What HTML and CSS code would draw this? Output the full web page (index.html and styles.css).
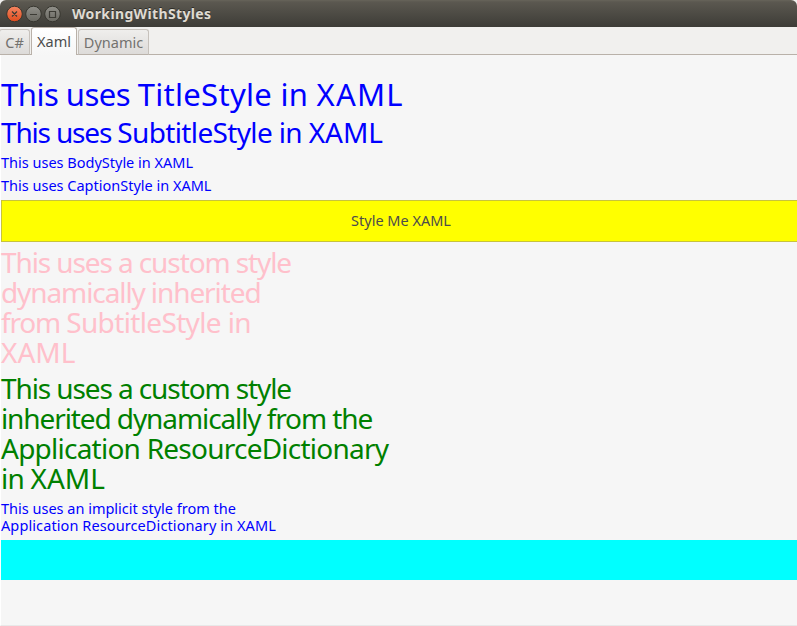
FILE: index.html
```html
<!DOCTYPE html>
<html lang="en">
<head>
<meta charset="utf-8">
<title>WorkingWithStyles</title>
<link rel="stylesheet" href="styles.css">
</head>
<body>
<div class="window">
  <header class="titlebar">
    <svg class="controls" width="56" height="18" viewBox="0 0 56 18" aria-hidden="true">
      <defs>
        <linearGradient id="close" x2="0" y2="1"><stop stop-color="#f58662"/><stop offset="1" stop-color="#df4c1d"/></linearGradient>
        <linearGradient id="plain" x2="0" y2="1"><stop stop-color="#91908a"/><stop offset="1" stop-color="#696861"/></linearGradient>
      </defs>
      <g stroke="#37362f">
        <circle cx="8.5" cy="9" r="7.8" fill="url(#close)"/>
        <circle cx="27.5" cy="9" r="7.8" fill="url(#plain)"/>
        <circle cx="46.5" cy="9" r="7.8" fill="url(#plain)"/>
      </g>
      <path d="M6 6.5l5 5m0-5l-5 5M24 9.5h7M43.5 6.5h6v6h-6z" fill="none" stroke="#3c3b35" stroke-width="1.2"/>
    </svg>
    <h1 class="window-title">WorkingWithStyles</h1>
  </header>
  <nav class="tabs">
    <div class="tab tab-first">C#</div>
    <div class="tab tab-active">Xaml</div>
    <div class="tab tab-last">Dynamic</div>
  </nav>
  <main class="page">
    <p class="label title"><span class="title-lead">This uses </span>TitleStyle in <span class="wide">XAML</span></p>
    <p class="label subtitle"><span class="subtitle-lead">This uses </span><span class="subtitle-rest">SubtitleStyle in </span><span class="normal">XAML</span></p>
    <p class="label body">This uses BodyStyle in XAML</p>
    <p class="label body caption">This uses CaptionStyle in XAML</p>
    <button class="style-button">Style Me XAML</button>
    <p class="label subtitle pink"><span class="tight">This uses a custom style</span><br><span class="tight">dynamically inherited</span><br><span class="subtitle-lead">from </span><span class="subtitle-rest">SubtitleStyle in</span><br><span class="normal">XAML</span></p>
    <p class="label subtitle green"><span class="tight">This uses a custom style</span><br><span class="tight">inherited dynamically from the</span><br>Application ResourceDictionary<br>in <span class="normal">XAML</span></p>
    <p class="label body implicit">This uses an implicit style from the<br><span class="loose">Application ResourceDictionary in XAML</span></p>
    <div class="box"></div>
  </main>
</div>
</body>
</html>
```
FILE: styles.css
```css
* { box-sizing: border-box; }
body {
  margin: 0;
  font-family: "Noto Sans", sans-serif;
  font-size: 14.5px;
  overflow: hidden;
}
.window {
  display: flex;
  flex-direction: column;
  width: 797px;
  height: 626px;
  background: #f1f0ee;
}
.titlebar {
  display: flex;
  align-items: center;
  height: 27px;
  padding-left: 6px;
  gap: 10px;
  background: linear-gradient(#67645a 0, #5b5850 2px, #3d3c37 100%);
  border-radius: 6px 6px 0 0;
}
.window-title {
  margin: 0;
  color: #dfdbd2;
  font-size: 14px;
  line-height: 26px;
  letter-spacing: 0.36px;
  text-shadow: 0 -1px #2d2c28;
}
.tabs {
  display: flex;
  align-items: flex-end;
  gap: 1px;
  height: 28px;
  box-shadow: inset 0 -1px #b9b1a9;
}
.tab {
  height: 26px;
  border: 1px solid #c6c1bb;
  border-bottom-color: #b9b1a9;
  border-radius: 3px 3px 0 0;
  background: linear-gradient(#efeeec, #dddbd9);
  color: #73726f;
  line-height: 25px;
  text-align: center;
}
.tab-first { width: 31px; margin-left: -1px; }
.tab-active {
  width: 46px;
  height: 28px;
  border-color: #b9b1a9;
  border-bottom: 0;
  background: linear-gradient(#fff, #f6f6f6);
  color: #4c4c4c;
  line-height: 27px;
}
.tab-last { width: 71px; }
.page {
  display: flex;
  flex-direction: column;
  gap: 6px;
  flex: 1;
  padding-top: 20px;
  border-left: 1px solid #fff;
  border-bottom: 1px solid #e8e8e8;
  background: #f6f6f6;
}
.label { margin: 0; color: #00f; white-space: nowrap; }
.title { height: 37px; font-size: 31px; line-height: 39px; letter-spacing: 0.3px; }
.title-lead { letter-spacing: -0.5px; }
.wide { letter-spacing: 1.2px; }
.subtitle { margin: -1px 0 1px; font-size: 28px; line-height: 30px; letter-spacing: -0.76px; }
.subtitle-lead { letter-spacing: -1.17px; }
.subtitle-rest { letter-spacing: -0.64px; }
.tight { letter-spacing: -1.1px; }
.normal { letter-spacing: 0; }
.body { font-size: 14.5px; line-height: 17px; }
.loose { letter-spacing: 0.1px; }
.style-button {
  height: 42px;
  padding: 0 0 2px 3px;
  border: 1px solid #c8c33c;
  border-right: 0;
  background: #ff0;
  color: #4c4c4c;
  font: 14.5px "Noto Sans", sans-serif;
}
.pink { color: #ffc0cb; }
.green { color: #008000; }
.box { height: 40px; background: #0ff; }
```
